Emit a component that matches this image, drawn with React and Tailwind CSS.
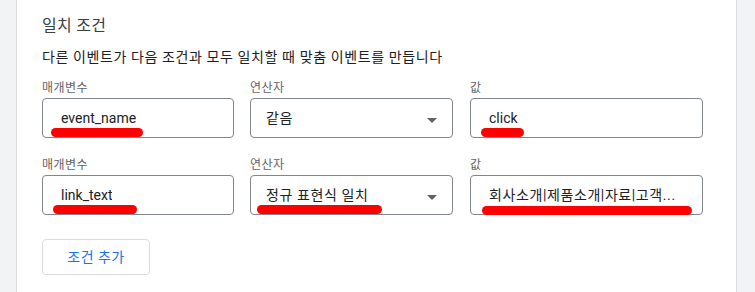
import React from 'react';

const font = { fontFamily: 'Roboto, "Noto Sans CJK KR", "Noto Sans", sans-serif' };

const Mark = ({ className }) => (
  <span className={`absolute h-[9px] rounded-full bg-[#ff0000] ${className}`} />
);

const Caret = () => (
  <svg width="10" height="5" viewBox="0 0 10 5" className="absolute right-[15px] top-[19px]">
    <path d="M0 0 L10 0 L5 5 Z" fill="#5f6368" />
  </svg>
);

const Field = ({ label, width, value, padding, select, mark, ko }) => (
  <div className={`flex flex-col ${width}`}>
    <div className="text-[12px] leading-[16px] tracking-[0.5px] text-[#5f6368]">{label}</div>
    <div className={`relative mt-[2px] flex h-[40px] items-center rounded-[4px] border border-[#80868b] ${padding}`}>
      <span className={`truncate text-[14px] leading-[20px] text-[#202124] ${ko ? 'tracking-[0.6px]' : ''}`}>{value}</span>
      {select && <Caret />}
      {mark}
    </div>
  </div>
);

const Row = ({ p, op, v, className }) => (
  <div className={`flex ${className}`}>
    <Field label="매개변수" width="w-[192px]" padding="pl-[18px]" value={p.text} mark={p.mark} />
    <Field label="연산자" width="ml-[16px] w-[203px]" padding="pl-[15px] pr-[30px]" value={op.text} select ko mark={op.mark} />
    <Field label="값" width="ml-[17px] w-[233px]" padding="pl-[18px] pr-[8px]" value={v.text} ko={v.ko} mark={v.mark} />
  </div>
);

export default function App() {
  return (
    <div className="flex h-[292px] w-[755px] bg-[#f1f3f4] pl-[16px] pr-[18px]" style={font}>
      <div className="flex flex-1 flex-col border-x border-[#dadce0] bg-white pl-[25px] pt-[16px]">
        <h2 className="text-[16px] leading-[20px] tracking-[0.3px] text-[#3c4043]">일치 조건</h2>
        <p className="mt-[11px] text-[14px] leading-[20px] tracking-[0.6px] text-[#202124]">
          다른 이벤트가 다음 조건과 모두 일치할 때 맞춤 이벤트를 만듭니다
        </p>

        <Row
          className="mt-[13px]"
          p={{ text: 'event_name', mark: <Mark className="left-[8px] top-[29px] w-[92px]" /> }}
          op={{ text: '같음' }}
          v={{ text: 'click', mark: <Mark className="left-[10px] top-[29px] w-[43px]" /> }}
        />
        <Row
          className="mt-[19px]"
          p={{ text: 'link_text', mark: <Mark className="left-[10px] top-[29px] w-[84px]" /> }}
          op={{ text: '정규 표현식 일치', mark: <Mark className="left-[6px] top-[29px] w-[125px]" /> }}
          v={{ text: '회사소개|제품소개|자료|고객...', ko: true, mark: <Mark className="left-[11px] top-[30px] h-[8px] w-[210px]" /> }}
        />

        <button className="mt-[24px] h-[36px] w-[108px] rounded-[4px] border border-[#dadce0] bg-white text-[14px] tracking-[0.5px] text-[#1a73e8]">
          조건 추가
        </button>
      </div>
    </div>
  );
}
